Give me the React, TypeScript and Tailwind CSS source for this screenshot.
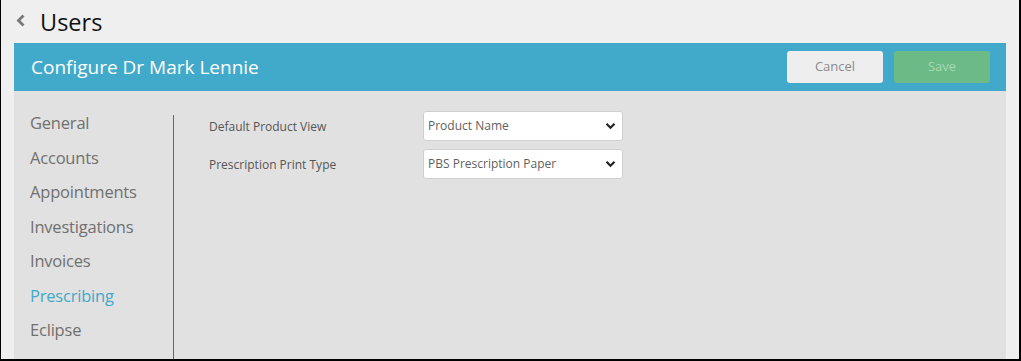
import { useState } from "react";

const tabs = [
  "General",
  "Accounts",
  "Appointments",
  "Investigations",
  "Invoices",
  "Prescribing",
  "Eclipse",
];

export default function App() {
  const [active, setActive] = useState("Prescribing");

  return (
    <div
      className="w-[1021px] h-[361px] bg-[#efefef] border-l border-r-2 border-b-2 border-black flex flex-col overflow-hidden"
      style={{ fontFamily: '"Open Sans", sans-serif' }}
    >
      {/* HEADER */}
      <div className="h-[43px] flex items-center pl-[15px] pt-[2px] shrink-0">
        <svg width="10" height="13" viewBox="0 0 10 13" className="mb-[4px]">
          <path d="M7.5 1.5 L2.5 6.5 L7.5 11.5" fill="none" stroke="#777" strokeWidth="2.8" />
        </svg>
        <span className="ml-[14px] text-[23.5px] text-[#111] leading-none">Users</span>
      </div>

      <div className="flex flex-col flex-1 mx-[13px]">
        {/* TITLE BAR */}
        <div className="h-[48px] bg-[#41a9c9] flex items-center justify-between pl-[17px] pr-[16px] shrink-0">
          <h1 className="text-white text-[19px] leading-none">Configure Dr Mark Lennie</h1>
          <div className="flex gap-[11px]">
            <button className="w-[96px] h-[32px] rounded-[3px] bg-[#eeeeee] text-[#8a8a8a] text-[13px]">
              Cancel
            </button>
            <button className="w-[96px] h-[32px] rounded-[3px] bg-[#6cba85] text-[#a6d9b6] text-[13px]">
              Save
            </button>
          </div>
        </div>

        {/* BODY */}
        <div className="flex-1 bg-[#e1e1e1] flex">
          <ul className="w-[159px] pl-[16px] pt-[15px]">
            {tabs.map((t) => (
              <li
                key={t}
                onClick={() => setActive(t)}
                className={`text-[16.5px] leading-[34.5px] tracking-[-0.2px] cursor-pointer ${
                  t === active ? "text-[#41a9c9]" : "text-[#707070]"
                }`}
              >
                {t}
              </li>
            ))}
          </ul>

          <div className="w-px bg-[#666] mt-[24px]" />

          <div className="pl-[35px] pt-[20px] flex flex-col gap-[8px]">
            <Row label="Default Product View" value="Product Name" />
            <Row label="Prescription Print Type" value="PBS Prescription Paper" />
          </div>
        </div>
      </div>
    </div>
  );
}

function Row({ label, value }: { label: string; value: string }) {
  return (
    <div className="flex items-center">
      <label className="w-[214px] text-[12px] text-[#555] pt-[2px]">{label}</label>
      <div className="w-[200px] h-[30px] bg-white border border-[#cfcfcf] rounded-[3px] flex items-center justify-between pl-[4px] pr-[6px]">
        <span className="text-[12px] text-[#5f5f5f]">{value}</span>
        <svg width="11" height="8" viewBox="0 0 11 8">
          <path d="M1.5 1.8 L5.5 5.8 L9.5 1.8" fill="none" stroke="#222" strokeWidth="2.2" />
        </svg>
      </div>
    </div>
  );
}
